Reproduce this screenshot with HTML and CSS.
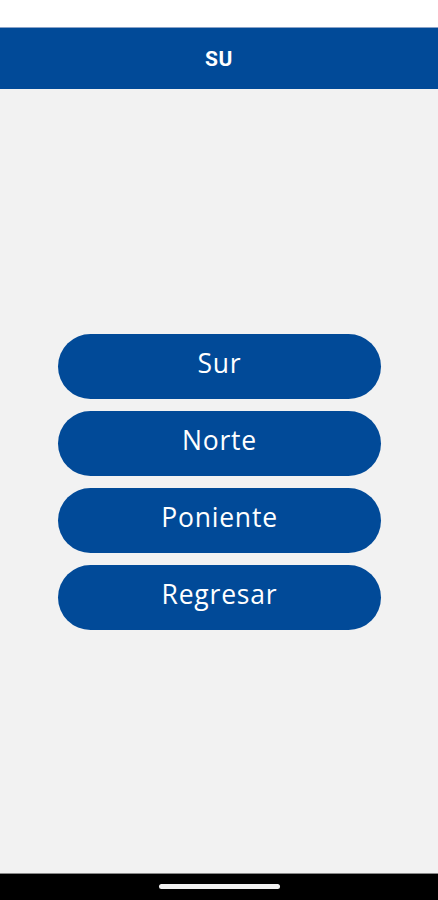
FILE: index.html
```html
<!DOCTYPE html>
<html>
	<head>
		<meta http-equiv="Content-Type" content="text/html; charset=UTF-8">
		<meta name="viewport" content="width=device-width, initial-scale=1">
		<title>SU</title>
		<link rel="stylesheet" href="styles.css">
	</head>
	<body>
		<div class="div-root">
			<div class="div-root-stat"></div>
			<div class="div-root-head">SU</div>
			<div class="div-root-main">
				<div class="menu">
					<button class="menu-button" type="button">Sur</button>
					<button class="menu-button" type="button">Norte</button>
					<button class="menu-button" type="button">Poniente</button>
					<button class="menu-button" type="button">Regresar</button>
				</div>
			</div>
			<div class="div-root-nav"><span class="div-root-nav-pill"></span></div>
		</div>
	</body>
</html>
```
FILE: styles.css
```css
body{margin: 0px; width: 438px; height: 900px; font-family: "Open Sans", "Liberation Sans", sans-serif;}
.div-root{display: flex; flex-direction: column; width: 100%; height: 100%;}
.div-root-stat{height: 27px; background: #ffffff;}
.div-root-head{display: flex; justify-content: center; align-items: center; height: 62px; background: #014a98; color: #ffffff; font-family: Roboto, "Liberation Sans", sans-serif; font-weight: bold; font-size: 21px; letter-spacing: 0.5px; border-top: 1px solid #8aa3c8; box-sizing: border-box; padding-top: 1px;}
.div-root-main{flex: 1; display: flex; justify-content: center; align-items: center; background: #f2f2f2; padding-top: 1px;}
.menu{display: flex; flex-direction: column; gap: 12px; width: 323px; margin-left: 1px;}
.menu-button{height: 65px; border: none; border-radius: 33px; background: #014a98; color: #ffffff; font-family: "Open Sans", "Liberation Sans", sans-serif; font-size: 26.5px; letter-spacing: 0.8px; padding: 0px 0px 6px 0px;}
.div-root-nav{display: flex; justify-content: center; align-items: flex-start; height: 27px; background: #000000; border-top: 1px solid #888888; box-sizing: border-box;}
.div-root-nav-pill{width: 121px; height: 5px; margin-top: 10px; border-radius: 3px; background: #f2f2f2;}
```
